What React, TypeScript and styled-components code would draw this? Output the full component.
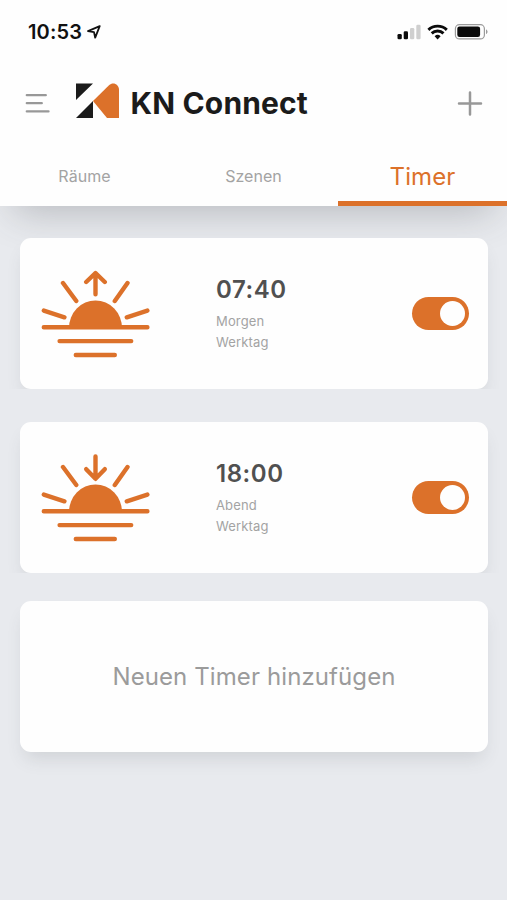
import React, { useState } from "react";
import styled, { createGlobalStyle } from "styled-components";

const ORANGE = "#dc712a";

const GlobalStyle = createGlobalStyle`
  * { box-sizing: border-box; }
  body { margin: 0; background: #e8eaee; font-family: Inter, "Liberation Sans", sans-serif; }
  button { font: inherit; border: 0; padding: 0; background: none; cursor: pointer; }
  svg { display: block; }
`;

const Screen = styled.div`
  width: 507px;
  height: 900px;
  overflow: hidden;
  background: #e8eaee;
`;

const Header = styled.header`
  position: relative;
  height: 206px;
  background: #fefefe;
  box-shadow: 0 20px 36px -14px rgba(70, 74, 80, 0.3);
`;

const StatusBar = styled.div`
  display: flex;
  align-items: center;
  justify-content: space-between;
  height: 64px;
  padding: 0 18px 0 28px;
`;

const Clock = styled.div`
  display: flex;
  align-items: center;
  gap: 5px;
  font-size: 20px;
  font-weight: 600;
  color: #111;
  letter-spacing: 0.15px;
`;

const StatusIcons = styled.div`
  display: flex;
  align-items: center;
`;

const TitleBar = styled.div`
  display: flex;
  align-items: center;
  height: 78px;
  padding: 0 24px 0 24.5px;
`;

const IconButton = styled.button`
  display: flex;
  flex: none;
`;

const Brand = styled.div`
  display: flex;
  align-items: center;
  flex: 1;
  gap: 11.5px;
  margin-left: 26.5px;
`;

const BrandName = styled.h1`
  margin: 0;
  font-size: 30px;
  line-height: 40px;
  font-weight: 700;
  letter-spacing: 0.15px;
  color: #1b1b1b;
  white-space: nowrap;
`;

const Tabs = styled.nav`
  display: grid;
  grid-template-columns: repeat(3, 1fr);
  height: 64px;
`;

const Tab = styled.button<{ $active: boolean }>`
  height: 64px;
  padding-top: ${(p) => (p.$active ? "9px" : "8px")};
  border-bottom: 5px solid ${(p) => (p.$active ? ORANGE : "transparent")};
  color: ${(p) => (p.$active ? ORANGE : "#a3a3a3")};
  font-size: ${(p) => (p.$active ? "24px" : "16px")};
  letter-spacing: ${(p) => (p.$active ? "0.1px" : "0.05px")};
`;

const List = styled.main`
  display: flex;
  flex-direction: column;
`;

const Slot = styled.div<{ $clip: boolean; $top: number }>`
  position: relative;
  padding: 0 19px 0 20px;
  margin-top: ${(p) => p.$top}px;
  overflow: ${(p) => (p.$clip ? "hidden" : "visible")};
`;

const Card = styled.section`
  display: flex;
  align-items: center;
  height: 151px;
  padding: 0 19px 0 21px;
  border-radius: 11px;
  background: #fefefe;
  box-shadow: 0 11px 18px -5px rgba(70, 74, 80, 0.15);
`;

const TimerInfo = styled.div`
  flex: 1;
  margin-left: 66px;
`;

const Time = styled.div`
  margin-bottom: 5px;
  font-size: 24px;
  line-height: 32px;
  font-weight: 600;
  letter-spacing: 0.55px;
  color: #505050;
`;

const Detail = styled.div`
  font-size: 13px;
  line-height: 21.5px;
  letter-spacing: 0.15px;
  color: #a3a3a3;
`;

const Switch = styled.button<{ $on: boolean }>`
  display: flex;
  align-items: center;
  justify-content: ${(p) => (p.$on ? "flex-end" : "flex-start")};
  width: 57px;
  height: 33px;
  padding: 0 4px;
  border-radius: 17px;
  background: ${(p) => (p.$on ? ORANGE : "#c4c6ca")};
`;

const Knob = styled.span`
  width: 25px;
  height: 25px;
  border-radius: 50%;
  background: #fefefe;
`;

const AddCard = styled(Card).attrs({ as: "button" })`
  justify-content: center;
  width: 100%;
  padding: 0;
  color: #9b9b9b;
  background: #fefefe;
  font-size: 24px;
  letter-spacing: 0.1px;
`;

function LocationArrow() {
  return (
    <svg width="14" height="14" viewBox="0 0 14 14" fill="none" stroke="#111" strokeWidth="1.8" strokeLinejoin="round">
      <path d="M12.7 1.2 1 6.2 7 7.1 8.2 12.7Z" />
    </svg>
  );
}

function StatusGlyphs() {
  return (
    <svg width="92" height="18" viewBox="397 23 92 18">
      <rect x="397.5" y="34" width="4.3" height="5.2" rx="1.3" fill="#0b0b0b" />
      <rect x="403.7" y="31.2" width="4.3" height="8" rx="1.3" fill="#0b0b0b" />
      <rect x="410" y="28" width="4.3" height="11.2" rx="1.3" fill="#cfcfcf" />
      <rect x="416.3" y="24.8" width="4.3" height="14.4" rx="1.3" fill="#cfcfcf" />
      <g fill="none" stroke="#0b0b0b" strokeWidth="2.9">
        <path d="M428.4 29.9a13.2 13.2 0 0 1 18.4 0" />
        <path d="M431.7 33.4a8.5 8.5 0 0 1 11.8 0" />
      </g>
      <path d="M434.6 36.2a4.4 4.4 0 0 1 6 0l-3 3.2Z" fill="#0b0b0b" />
      <rect x="455.4" y="24.7" width="29" height="14.2" rx="4" fill="none" stroke="#9b9b9b" strokeWidth="1.2" />
      <rect x="457.3" y="26.6" width="22.8" height="10.4" rx="2.2" fill="#0b0b0b" />
      <path d="M486 29.6c2 .7 2 3.8 0 4.5Z" fill="#9b9b9b" />
    </svg>
  );
}

function MenuIcon() {
  return (
    <svg width="25" height="20" viewBox="0 0 25 20" stroke="#989898" strokeWidth="2.3" strokeLinecap="round">
      <path d="M1.8 2.2h19M1.8 10.2h15M1.8 18.4h21.7" />
    </svg>
  );
}

function PlusIcon() {
  return (
    <svg width="26" height="26" viewBox="0 0 26 26" stroke="#989898" strokeWidth="2.5" strokeLinecap="round">
      <path d="M13 2.4v22M2 13.4h22" />
    </svg>
  );
}

function Logo() {
  return (
    <svg width="43" height="40" viewBox="0 0 43 40">
      <path d="M0 .5h17L0 17ZM17 18v17H0Z" fill="#1b1b1b" />
      <path d="M17 18 33 2.3C37-1.6 43 1.2 43 7v28H31Z" fill={ORANGE} />
    </svg>
  );
}

function SunIcon({ rising }: { rising: boolean }) {
  return (
    <svg width="109" height="88" viewBox="41 270 109 88" fill="none" stroke={ORANGE} strokeWidth="4.4" strokeLinecap="round" strokeLinejoin="round">
      <path d="M43.8 327.3h103.6M59.6 341.1h71.6M75.8 355h39" />
      <path d="M69 328a26.5 27.5 0 0 1 53 0Z" fill={ORANGE} stroke="none" />
      <path d="m43.8 310.6 20.6 6.7M63 283l13.3 18M127.5 283l-12.7 18M147.4 310.6l-20.6 6.7" />
      {rising ? (
        <path d="M95.5 294.3v-21M86.2 282l9.3-9 9.3 9" />
      ) : (
        <path d="M95.5 272.5v22M86.2 285.2l9.3 9.6 9.3-9.6" />
      )}
    </svg>
  );
}

const TABS = ["Räume", "Szenen", "Timer"];

const TIMERS = [
  { time: "07:40", part: "Morgen", days: "Werktag", rising: true, top: 32 },
  { time: "18:00", part: "Abend", days: "Werktag", rising: false, top: 33 },
];

function TimerCard({ time, part, days, rising, top }: (typeof TIMERS)[number]) {
  const [on, setOn] = useState(true);
  return (
    <Slot $clip $top={top}>
      <Card>
        <SunIcon rising={rising} />
        <TimerInfo>
          <Time>{time}</Time>
          <Detail>{part}</Detail>
          <Detail>{days}</Detail>
        </TimerInfo>
        <Switch $on={on} role="switch" aria-checked={on} aria-label={time} onClick={() => setOn(!on)}>
          <Knob />
        </Switch>
      </Card>
    </Slot>
  );
}

export default function App() {
  const [active, setActive] = useState("Timer");
  return (
    <Screen>
      <GlobalStyle />
      <Header>
        <StatusBar>
          <Clock>
            10:53
            <LocationArrow />
          </Clock>
          <StatusIcons>
            <StatusGlyphs />
          </StatusIcons>
        </StatusBar>
        <TitleBar>
          <IconButton aria-label="Menü">
            <MenuIcon />
          </IconButton>
          <Brand>
            <Logo />
            <BrandName>KN Connect</BrandName>
          </Brand>
          <IconButton aria-label="Hinzufügen">
            <PlusIcon />
          </IconButton>
        </TitleBar>
        <Tabs>
          {TABS.map((tab) => (
            <Tab key={tab} $active={tab === active} onClick={() => setActive(tab)}>
              {tab}
            </Tab>
          ))}
        </Tabs>
      </Header>
      <List>
        {TIMERS.map((timer) => (
          <TimerCard key={timer.time} {...timer} />
        ))}
        <Slot $clip={false} $top={28}>
          <AddCard>Neuen Timer hinzufügen</AddCard>
        </Slot>
      </List>
    </Screen>
  );
}
